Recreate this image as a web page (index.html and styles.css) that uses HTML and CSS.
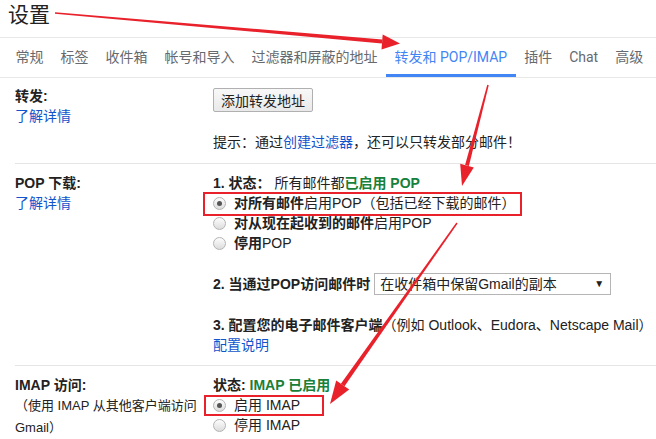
FILE: index.html
```html
<!DOCTYPE html>
<html lang="zh-CN">
<head>
<meta charset="utf-8">
<title>设置</title>
<link rel="stylesheet" href="styles.css">
</head>
<body>
<div class="page">
  <h1 class="title">设置</h1>
  <nav class="tabs">
    <span class="tab">常规</span>
    <span class="tab">标签</span>
    <span class="tab">收件箱</span>
    <span class="tab">帐号和导入</span>
    <span class="tab">过滤器和屏蔽的地址</span>
    <span class="tab active">转发和 POP/IMAP</span>
    <span class="tab">插件</span>
    <span class="tab">Chat</span>
    <span class="tab">高级</span>
  </nav>

  <section class="section sec-fwd">
    <div class="label">
      <div class="label-title">转发:</div>
      <a class="link">了解详情</a>
    </div>
    <div class="content">
      <button class="btn">添加转发地址</button>
      <div class="hint">提示：通过<a class="link">创建过滤器</a>，还可以只转发部分邮件！</div>
    </div>
  </section>

  <section class="section sec-pop">
    <div class="label">
      <div class="label-title">POP 下载:</div>
      <a class="link">了解详情</a>
    </div>
    <div class="content">
      <div class="row"><b>1. 状态：</b> 所有邮件都<b class="green">已启用 POP</b></div>
      <div class="row radio-row"><span class="radio checked"></span><span><b>对所有邮件</b>启用POP（包括已经下载的邮件）</span></div>
      <div class="row radio-row"><span class="radio"></span><span><b>对从现在起收到的邮件</b>启用POP</span></div>
      <div class="row radio-row"><span class="radio"></span><span><b>停用</b>POP</span></div>
      <div class="row when">
        <b>2. 当通过POP访问邮件时</b>
        <div class="select"><span>在收件箱中保留Gmail的副本</span><span class="caret">▼</span></div>
      </div>
      <div class="row step3"><b>3. 配置您的电子邮件客户端</b>（例如 Outlook、Eudora、Netscape Mail）</div>
      <div class="row"><a class="link">配置说明</a></div>
    </div>
  </section>

  <section class="section sec-imap">
    <div class="label">
      <div class="label-title">IMAP 访问:</div>
      <div class="label-note"><span class="nowrap">（使用 IMAP 从其他客户端访问</span> <span class="nowrap">Gmail）</span></div>
    </div>
    <div class="content">
      <div class="row"><b>状态: </b><b class="green">IMAP 已启用</b></div>
      <div class="row radio-row"><span class="radio checked"></span><span>启用 IMAP</span></div>
      <div class="row radio-row"><span class="radio"></span><span>停用 IMAP</span></div>
    </div>
  </section>

  <svg class="annot" width="656" height="439" viewBox="0 0 656 439">
    <g fill="#e8212b">
      <polygon points="55.06,12.25 54.94,13.75 381.9,43.4 382.3,39.4"/>
      <polygon points="400,43.5 381.5,49.4 382.7,34.4"/>
      <polygon points="488.73,85.19 487.27,84.81 465.1,165.1 468.9,166.1"/>
      <polygon points="462,186 473.8,167.4 460.2,163.8"/>
      <polygon points="457.6,223.4 456.4,222.6 340.9,383.7 344.5,386.3"/>
      <polygon points="330,404 349.2,389.6 336.2,380.4"/>
    </g>
    <g fill="none" stroke="#e8212b" stroke-width="2">
      <rect x="204" y="193" width="317" height="22"/>
      <rect x="205" y="396" width="118" height="19"/>
    </g>
  </svg>
</div>
</body>
</html>
```
FILE: styles.css
```css
* { box-sizing: border-box; }
body {
  margin: 0;
  font-family: "Liberation Sans", Arial, "Noto Sans CJK SC", sans-serif;
  font-size: 14px;
  color: #222;
  background: #fff;
}
.page { position: relative; width: 656px; height: 439px; overflow: hidden; }
.title {
  margin: 0;
  height: 38px;
  padding: 0 8px;
  font-size: 21px;
  font-weight: normal;
  line-height: 30px;
  color: #222;
  border-bottom: 1px solid #e8e8e8;
}
.tabs {
  display: flex;
  height: 40px;
  padding-left: 7px;
  border-bottom: 1px solid #e8e8e8;
  font-family: Roboto, "Noto Sans CJK SC", sans-serif;
  font-size: 14px;
  white-space: nowrap;
}
.tab {
  padding: 0 8.5px;
  height: 39px;
  line-height: 38px;
  color: #666a6e;
}
.tab.active {
  color: #4285f4;
  box-shadow: inset 0 -3px 0 #4285f4;
}
.section {
  display: grid;
  grid-template-columns: 198px 1fr;
  margin-left: 15px;
  border-bottom: 1px solid #e5e5e5;
}
.label { padding-right: 2px; }
.label-title { font-weight: bold; line-height: 20px; }
.label-note { font-size: 13px; line-height: 22px; margin-top: 0; }
.nowrap { white-space: nowrap; }
.link { color: #1155cc; text-decoration: none; display: inline-block; line-height: 20px; }
.content { display: flex; flex-direction: column; align-items: flex-start; }
.row { line-height: 20px; white-space: nowrap; }
.green { color: #188038; }

.sec-fwd { padding: 8px 0 11px; }
.btn {
  margin-top: 2px;
  height: 24px;
  padding: 0 7px;
  font: inherit;
  font-size: 14px;
  color: #222;
  background: linear-gradient(#f8f8f8, #e9e9e9);
  border: 1px solid #b0b0b0;
  border-radius: 2px;
}
.hint { margin-top: 20px; line-height: 20px; }

.sec-pop { padding: 9px 0 10px; }
.radio-row { display: flex; align-items: center; }
.radio {
  position: relative;
  width: 13px;
  height: 13px;
  margin-right: 8px;
  border-radius: 50%;
  border: 1px solid #b4b4b4;
  background: linear-gradient(#fdfdfd, #dcdcdc);
  flex: none;
}
.radio.checked::after {
  content: "";
  position: absolute;
  left: 3px; top: 3px;
  width: 5px; height: 5px;
  border-radius: 50%;
  background: #555;
}
.when { display: flex; align-items: center; gap: 4px; margin-top: 20px; }
.select {
  display: flex;
  justify-content: space-between;
  align-items: center;
  width: 237px;
  height: 22px;
  padding: 0 6px 0 5px;
  border: 1px solid #b5b5b5;
  background: #fff;
  line-height: 20px;
}
.caret { font-size: 10px; color: #222; }
.step3 { margin-top: 20px; }

.sec-imap { padding: 9px 0 8px; border-bottom: none; }

.annot { position: absolute; left: 0; top: 0; pointer-events: none; }
```
